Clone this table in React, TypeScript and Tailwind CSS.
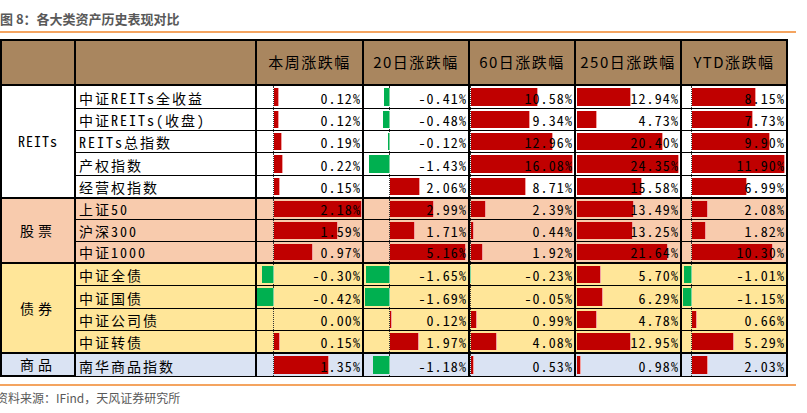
import React from "react";

type Col = { axis: number; scale: number; dotted: boolean };

// axis = px from the cell's inner left edge, scale = px per 1%
const COLS: Col[] = [
  { axis: 17, scale: 40.5, dotted: true },
  { axis: 26, scale: 14.8, dotted: true },
  { axis: 1, scale: 6.33, dotted: true },
  { axis: 1, scale: 4.2, dotted: false },
  { axis: 10, scale: 7.85, dotted: true },
];

type Row = { name: string; h: number; v: number[] };
type Group = { label: string; bg: string; track: string; rows: Row[] };

const GROUPS: Group[] = [
  {
    label: "REITs",
    bg: "bg-white",
    track: "tracking-[1px]",
    rows: [
      { name: "中证REITs全收益", h: 23, v: [0.12, -0.41, 10.58, 12.94, 8.15] },
      { name: "中证REITs(收盘)", h: 22, v: [0.12, -0.48, 9.34, 4.73, 7.73] },
      { name: "REITs总指数", h: 22, v: [0.19, -0.12, 12.96, 20.4, 9.9] },
      { name: "产权指数", h: 23, v: [0.22, -1.43, 16.08, 24.35, 11.9] },
      { name: "经营权指数", h: 23, v: [0.15, 2.06, 8.71, 15.58, 6.99] },
    ],
  },
  {
    label: "股票",
    bg: "bg-[#f8cbad]",
    track: "tracking-[4px]",
    rows: [
      { name: "上证50", h: 21, v: [2.18, 2.99, 2.39, 13.49, 2.08] },
      { name: "沪深300", h: 22, v: [1.59, 1.71, 0.44, 13.25, 1.82] },
      { name: "中证1000", h: 22, v: [0.97, 5.16, 1.92, 21.64, 10.3] },
    ],
  },
  {
    label: "债券",
    bg: "bg-[#ffe699]",
    track: "tracking-[4px]",
    rows: [
      { name: "中证全债", h: 22, v: [-0.3, -1.65, -0.23, 5.7, -1.01] },
      { name: "中证国债", h: 23, v: [-0.42, -1.69, -0.05, 6.29, -1.15] },
      { name: "中证公司债", h: 22, v: [0.0, 0.12, 0.99, 4.78, 0.66] },
      { name: "中证转债", h: 23, v: [0.15, 1.97, 4.08, 12.95, 5.29] },
    ],
  },
  {
    label: "商品",
    bg: "bg-[#dae3f3]",
    track: "tracking-[4px]",
    rows: [{ name: "南华商品指数", h: 21, v: [1.35, -1.18, 0.53, 0.98, 2.03] }],
  },
];

const HEADERS = ["本周涨跌幅", "20日涨跌幅", "60日涨跌幅", "250日涨跌幅", "YTD涨跌幅"];

function ValueCell({ v, col, h, top }: { v: number; col: number; h: number; top: boolean }) {
  const c = COLS[col];
  const raw = Math.abs(v) * c.scale;
  const w = v < 0 ? Math.min(raw, c.axis) : raw;
  return (
    <td
      className={`relative p-0 text-right align-bottom border-x-2 border-black ${top ? "border-t-2" : "border-t"} border-b`}
      style={{ height: h }}
    >
      {c.dotted && (
        <span
          className="absolute top-0 bottom-0 border-l border-dotted border-[#333]"
          style={{ left: c.axis - 1 }}
        />
      )}
      {w > 0.6 && (
        <span
          className={`absolute top-[2px] bottom-[2px] ${v < 0 ? "bg-[#00b050] border-r border-[#7fd3a0]" : "bg-[#c00000] border-r border-[#f2a0a0]"}`}
          style={v < 0 ? { left: c.axis - w, width: w } : { left: c.axis, width: w }}
        />
      )}
      <span className="relative block pr-[1px] text-[14px] leading-[19px] tracking-[1.1px] text-black font-['Noto_Sans_Mono_CJK_SC','Liberation_Mono',monospace]">
        {v.toFixed(2)}%
      </span>
    </td>
  );
}

export default function App() {
  return (
    <div className="w-[807px] h-[413px] bg-white overflow-hidden font-['Noto_Sans_CJK_SC',sans-serif]">
      <div className="pt-[10px] text-[13px] leading-[17px] font-bold text-[#595959]">
        图 8：各大类资产历史表现对比
      </div>
      <div className="mt-[4px] h-[2px] w-[796px] bg-[#f4a460]" />
      <table className="mt-[6px] w-[786px] table-fixed border-collapse">
        <colgroup>
          <col className="w-[74px]" />
          <col className="w-[181px]" />
          <col className="w-[107px]" />
          <col className="w-[106px]" />
          <col className="w-[106px]" />
          <col className="w-[106px]" />
          <col className="w-[106px]" />
        </colgroup>
        <thead>
          <tr className="bg-[#a9865f]">
            <th className="h-[45px] border-2 border-black" />
            <th className="border-2 border-black" />
            {HEADERS.map((t) => (
              <th
                key={t}
                className="border-2 border-black p-0 text-center font-normal text-[15px] tracking-[1.5px] text-black font-['Noto_Sans_CJK_SC',sans-serif]"
              >
                {t}
              </th>
            ))}
          </tr>
        </thead>
        <tbody>
          {GROUPS.map((g) =>
            g.rows.map((r, i) => (
              <tr key={r.name} className={g.bg}>
                {i === 0 && (
                  <td
                    rowSpan={g.rows.length}
                    className={`border-2 border-black text-center align-middle p-0 text-[14px] ${g.track} text-black font-['Noto_Sans_Mono_CJK_SC','Noto_Sans_CJK_SC',monospace]`}
                  >
                    {g.label}
                  </td>
                )}
                <td
                  className={`p-0 pl-[3px] align-bottom border-x-2 border-black ${i === 0 ? "border-t-2" : "border-t"} border-b text-[14px] leading-[19px] tracking-[2px] text-black font-['Noto_Sans_Mono_CJK_SC','Noto_Sans_CJK_SC',monospace] whitespace-nowrap`}
                  style={{ height: r.h }}
                >
                  {r.name}
                </td>
                {r.v.map((v, k) => (
                  <ValueCell key={k} v={v} col={k} h={r.h} top={i === 0} />
                ))}
              </tr>
            ))
          )}
        </tbody>
      </table>
      <div className="mt-[7px] h-[2px] w-[796px] bg-[#f4a460]" />
      <div className="mt-[4px] -ml-[4px] text-[12px] leading-[16px] text-[#595959]">
        资料来源：IFind，天风证券研究所
      </div>
    </div>
  );
}
